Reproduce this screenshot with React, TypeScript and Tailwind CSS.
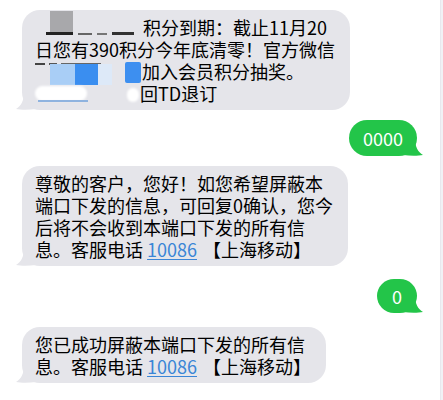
const FONT = '"Noto Sans CJK SC", "Noto Sans", sans-serif'

function LeftTail() {
  return (
    <svg
      className="absolute -left-[6px] bottom-0"
      width="20"
      height="18"
      viewBox="0 0 20 18"
    >
      <path d="M20 0 L20 17 C13 18 5 18 0 17 C5 14 8 9 8 0 Z" fill="#e5e5ea" />
    </svg>
  )
}

function RightTail() {
  return (
    <svg
      className="absolute -right-[6px] bottom-0"
      width="20"
      height="18"
      viewBox="0 0 20 18"
    >
      <path d="M0 0 L0 17 C7 18 15 18 20 17 C15 14 12 9 12 0 Z" fill="#23c549" />
    </svg>
  )
}

function Link({ children }: { children: React.ReactNode }) {
  return <span className="text-[#3a85d6] underline underline-offset-2 mr-[6px]">{children}</span>
}

function Gray({ lines, className = '' }: { lines: React.ReactNode[]; className?: string }) {
  return (
    <div className={`relative self-start ml-[22px] ${className}`}>
      <LeftTail />
      <div className="relative rounded-[18px] bg-[#e5e5ea] pl-[13px] pr-[15px] py-[6px] text-black leading-[22px]">
        {lines.map((l, i) => (
          <div key={i} className="h-[22px] whitespace-nowrap flex items-center">
            {l}
          </div>
        ))}
      </div>
    </div>
  )
}

function Green({ text, pad, className = '' }: { text: string; pad: string; className?: string }) {
  return (
    <div className={`relative self-end mr-[23px] ${className}`}>
      <RightTail />
      <div className={`relative rounded-[18px] bg-[#23c549] text-white leading-[22px] ${pad}`}>
        {text}
      </div>
    </div>
  )
}

export default function App() {
  const firstLines = [
    <>
      <span className="relative w-[108px] h-[22px] shrink-0">
        <span className="absolute left-[15px] -top-[5px] w-[23px] h-[24px] bg-[#a8a8ab] blur-[0.5px]" />
        <span className="absolute left-[11px] top-[16px] flex items-center gap-[5px] blur-[0.6px]">
          <span className="w-[27px] h-[3px] bg-[#222]" />
          <span className="w-[14px] h-[2px] bg-[#666]" />
          <span className="w-[10px] h-[2px] bg-[#777]" />
          <span className="w-[22px] h-[3px] bg-[#333]" />
        </span>
      </span>
      <span>积分到期：截止11月20</span>
    </>,
    <span>日您有390积分今年底清零！官方微信</span>,
    <>
      <span className="relative w-[107px] h-[22px] shrink-0">
        <span className="absolute left-0 top-[3px] flex gap-[4px] blur-[0.5px]">
          <span className="w-[10px] h-[2px] bg-[#444]" />
          <span className="w-[8px] h-[2px] bg-[#555]" />
          <span className="w-[40px] h-[2px] bg-[#666]" />
        </span>
        <span className="absolute left-[15px] top-[4px] flex h-[21px]">
          <span className="w-[25px] bg-[#a9cef6]" />
          <span className="w-[23px] bg-[#3a8ef0]" />
          <span className="w-[14px] bg-[#dde9f8]" />
        </span>
        <span className="absolute left-[90px] top-[2px] w-[16px] h-[21px] bg-[#3d8ff0] rounded-[2px]" />
      </span>
      <span>加入会员积分抽奖。</span>
    </>,
    <>
      <span className="relative w-[105px] h-[22px] shrink-0">
        <span className="absolute left-0 top-[4px] w-[52px] h-[15px] bg-white rounded-full blur-[1px]" />
        <span className="absolute left-[3px] top-[18px] w-[50px] h-[2px] bg-[#8fb3df] blur-[0.5px]" />
        <span className="absolute left-[92px] top-[6px] w-[12px] h-[14px] bg-white rounded-full blur-[1px]" />
      </span>
      <span>回TD退订</span>
    </>,
  ]

  return (
    <div
      className="w-[443px] h-[400px] bg-white overflow-hidden flex text-[18px]"
      style={{ fontFamily: FONT }}
    >
      <div className="flex-1 flex flex-col pt-[10px]">
        <Gray lines={firstLines} />
        <Green text="0000" pad="px-[14px] py-[7px]" className="mt-[10px]" />
        <Gray
          className="mt-[10px]"
          lines={[
            <span>尊敬的客户，您好！如您希望屏蔽本</span>,
            <span>端口下发的信息，可回复0确认，您今</span>,
            <span>后将不会收到本端口下发的所有信</span>,
            <span>
              息。客服电话 <Link>10086</Link>【上海移动】
            </span>,
          ]}
        />
        <Green text="0" pad="px-[15px] py-[6px]" className="mt-[13px]" />
        <Gray
          className="mt-[14px]"
          lines={[
            <span>您已成功屏蔽本端口下发的所有信</span>,
            <span>
              息。客服电话 <Link>10086</Link>【上海移动】
            </span>,
          ]}
        />
      </div>
      <div className="w-[3px] h-full bg-[#f1f1f5] border-l border-[#e8e8ee]" />
    </div>
  )
}
